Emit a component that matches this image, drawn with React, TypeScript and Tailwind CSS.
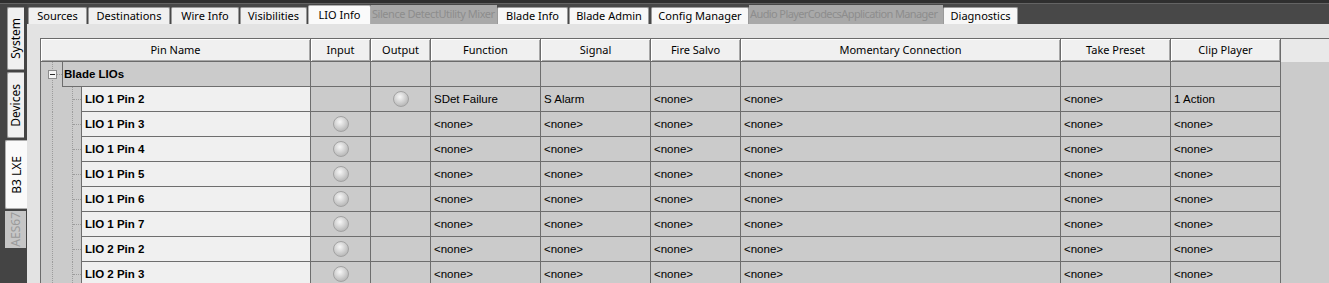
import React from "react";

const led = (
  <div className="w-[16px] h-[16px] rounded-full border border-[#a2a2a2] bg-[radial-gradient(circle_at_42%_35%,#f7f7f7_0%,#dadada_35%,#b9b9b9_75%,#a6a6a6_100%)]" />
);

function HeaderCell({ w, children }: { w: string; children?: React.ReactNode }) {
  return (
    <div
      className={`${w} h-full shrink-0 flex items-center justify-center pt-[1px] bg-[#f0f0f0] border-r border-b border-[#6b6b6b] shadow-[inset_1px_1px_0_#ffffff,inset_-1px_-1px_0_#a8a8a8] text-black`}
    >
      {children}
    </div>
  );
}

function Cell({ w, children, center }: { w: string; children?: React.ReactNode; center?: boolean }) {
  return (
    <div
      className={`${w} h-full shrink-0 flex items-center ${center ? "justify-center" : "pl-[3px] pt-[2px]"} border-r border-b border-[#6e6e6e] whitespace-nowrap overflow-hidden`}
    >
      {children}
    </div>
  );
}

type Row = {
  name: string;
  input: boolean;
  output: boolean;
  fn: string;
  signal: string;
  fire: string;
  mom: string;
  take: string;
  clip: string;
};

const N = "<none>";
const rows: Row[] = [
  { name: "LIO 1 Pin 2", input: false, output: true, fn: "SDet Failure", signal: "S Alarm", fire: N, mom: N, take: N, clip: "1 Action" },
  { name: "LIO 1 Pin 3", input: true, output: false, fn: N, signal: N, fire: N, mom: N, take: N, clip: N },
  { name: "LIO 1 Pin 4", input: true, output: false, fn: N, signal: N, fire: N, mom: N, take: N, clip: N },
  { name: "LIO 1 Pin 5", input: true, output: false, fn: N, signal: N, fire: N, mom: N, take: N, clip: N },
  { name: "LIO 1 Pin 6", input: true, output: false, fn: N, signal: N, fire: N, mom: N, take: N, clip: N },
  { name: "LIO 1 Pin 7", input: true, output: false, fn: N, signal: N, fire: N, mom: N, take: N, clip: N },
  { name: "LIO 2 Pin 2", input: true, output: false, fn: N, signal: N, fire: N, mom: N, take: N, clip: N },
  { name: "LIO 2 Pin 3", input: true, output: false, fn: N, signal: N, fire: N, mom: N, take: N, clip: N },
];

function Tab({ w, label, selected, light }: { w: string; label: string; selected?: boolean; light?: boolean }) {
  return (
    <div
      className={`${w} shrink-0 flex items-center justify-center rounded-t-[2px] border border-b-0 text-black whitespace-nowrap ${
        selected
          ? "h-[19px] bg-[#fafafa] border-[#b0b0b0]"
          : light
          ? "h-[17px] bg-[#f7f7f7] border-[#9a9a9a]"
          : "h-[17px] bg-[#f0f0f0] border-[#9a9a9a]"
      }`}
    >
      {label}
    </div>
  );
}

function DisabledTab({ w, label, tight }: { w: string; label: string; tight?: boolean }) {
  return (
    <div
      className={`${w} shrink-0 h-[19px] flex items-center bg-[#a9a9a9] text-[#8d8d8d] whitespace-nowrap overflow-hidden pl-[1px] ${
        tight ? "tracking-[-0.6px]" : "tracking-[-0.45px]"
      }`}
    >
      {label}
    </div>
  );
}

export default function App() {
  return (
    <div className="w-[1329px] h-[283px] overflow-hidden bg-[#484848] flex flex-col font-['Noto_Sans',sans-serif] text-[11px]">
      {/* top strip */}
      <div className="h-[4px] shrink-0 bg-[#2f2f2f] border-b border-[#646464]" />
      <div className="flex-1 flex min-h-0">
        {/* left vertical tabs */}
        <div className="w-[27px] shrink-0 flex flex-col pt-[3px] text-[12px] bg-[#444444]">
          <div className="ml-[7px] w-[17px] h-[63px] bg-[#f0f0f0] border border-[#9a9a9a] border-r-0 rounded-l-[2px] flex items-center justify-center">
            <span className="[writing-mode:vertical-rl] rotate-180 text-black leading-none whitespace-nowrap">System</span>
          </div>
          <div className="ml-[7px] mt-[2px] w-[17px] h-[66px] bg-[#f0f0f0] border border-[#9a9a9a] border-r-0 rounded-l-[2px] flex items-center justify-center">
            <span className="[writing-mode:vertical-rl] rotate-180 text-black leading-none whitespace-nowrap">Devices</span>
          </div>
          <div className="ml-[5px] mt-[2px] w-[22px] h-[69px] bg-[#fafafa] border border-[#b0b0b0] border-r-0 rounded-l-[2px] flex items-center justify-center">
            <span className="[writing-mode:vertical-rl] rotate-180 text-black leading-none whitespace-nowrap">B3 LXE</span>
          </div>
          <div className="ml-[5px] mt-[2px] w-[21px] h-[37px] bg-[#c6c6c6] flex items-center justify-center">
            <span className="[writing-mode:vertical-rl] rotate-180 text-[#9a9a9a] leading-none text-[12px] whitespace-nowrap">AES67</span>
          </div>
        </div>

        {/* main */}
        <div className="flex-1 flex flex-col min-w-0">
          {/* tab strip */}
          <div className="h-[20px] shrink-0 flex items-end pl-[1px]">
            <Tab w="w-[59px]" label="Sources" />
            <div className="w-[1px] shrink-0" />
            <Tab w="w-[82px]" label="Destinations" />
            <div className="w-[1px] shrink-0" />
            <Tab w="w-[68px]" label="Wire Info" />
            <div className="w-[1px] shrink-0" />
            <Tab w="w-[67px]" label="Visibilities" />
            <div className="w-[1px] shrink-0" />
            <Tab w="w-[63px]" label="LIO Info" selected />
            <DisabledTab w="w-[126px]" label="Silence DetectUtility Mixer" />
            <Tab w="w-[71px]" label="Blade Info" light />
            <div className="w-[1px] shrink-0" />
            <Tab w="w-[80px]" label="Blade Admin" light />
            <div className="w-[2px] shrink-0" />
            <Tab w="w-[98px]" label="Config Manager" light />
            <DisabledTab w="w-[194px]" label="Audio PlayerCodecsApplication Manager" tight />
            <Tab w="w-[75px]" label="Diagnostics" light />
          </div>

          {/* panel */}
          <div className="flex-1 min-h-0 bg-[#e3e3e3] pl-[13px] pt-[14px] flex">
            <div className="flex-1 min-w-0 border-t border-l border-[#6b6b6b] bg-[#cbcbcb] flex flex-col overflow-hidden">
              {/* header */}
              <div className="h-[23px] shrink-0 flex bg-[#e9e9e9]">
                <HeaderCell w="w-[270px]">Pin Name</HeaderCell>
                <HeaderCell w="w-[60px]">Input</HeaderCell>
                <HeaderCell w="w-[60px]">Output</HeaderCell>
                <HeaderCell w="w-[110px]">Function</HeaderCell>
                <HeaderCell w="w-[110px]">Signal</HeaderCell>
                <HeaderCell w="w-[90px]">Fire Salvo</HeaderCell>
                <HeaderCell w="w-[320px]">Momentary Connection</HeaderCell>
                <HeaderCell w="w-[110px]">Take Preset</HeaderCell>
                <HeaderCell w="w-[110px]">Clip Player</HeaderCell>
              </div>

              <div className="flex flex-col font-['Liberation_Sans',Arial,sans-serif] text-[11.5px] text-black">
                {/* Blade LIOs group row */}
                <div className="h-[25px] shrink-0 flex">
                  <div className="w-[21px] h-full shrink-0 relative">
                    <div className="absolute left-[11px] top-0 bottom-0 border-l border-dotted border-[#9c9c9c]" />
                    <div className="absolute left-[16px] top-[12px] w-[5px] border-t border-dotted border-[#9c9c9c]" />
                    <div className="absolute left-[7px] top-[8px] w-[9px] h-[9px] border border-[#8c8c8c] bg-[#f4f4f4] flex items-center justify-center">
                      <div className="w-[5px] h-[1px] bg-[#2a2a2a]" />
                    </div>
                  </div>
                  <div className="w-[249px] h-full shrink-0 flex items-center pl-[1px] pt-[2px] border-l border-r border-b border-[#6e6e6e] font-bold">
                    Blade LIOs
                  </div>
                  <Cell w="w-[60px]" />
                  <Cell w="w-[60px]" />
                  <Cell w="w-[110px]" />
                  <Cell w="w-[110px]" />
                  <Cell w="w-[90px]" />
                  <Cell w="w-[320px]" />
                  <Cell w="w-[110px]" />
                  <Cell w="w-[110px]" />
                </div>

                {rows.map((r) => (
                  <div key={r.name} className="h-[25px] shrink-0 flex">
                    <div className="w-[40px] h-full shrink-0 relative">
                      <div className="absolute left-[11px] top-0 bottom-0 border-l border-dotted border-[#9c9c9c]" />
                      <div className="absolute left-[31px] top-0 bottom-0 border-l border-dotted border-[#9c9c9c]" />
                      <div className="absolute left-[32px] top-[12px] w-[8px] border-t border-dotted border-[#9c9c9c]" />
                    </div>
                    <div className="w-[230px] h-full shrink-0 flex items-center pl-[3px] pt-[2px] bg-[#f0f0f0] border-l border-r border-b border-[#6e6e6e] font-bold">
                      {r.name}
                    </div>
                    <Cell w="w-[60px]" center>{r.input ? led : null}</Cell>
                    <Cell w="w-[60px]" center>{r.output ? led : null}</Cell>
                    <Cell w="w-[110px]">{r.fn}</Cell>
                    <Cell w="w-[110px]">{r.signal}</Cell>
                    <Cell w="w-[90px]">{r.fire}</Cell>
                    <Cell w="w-[320px]">{r.mom}</Cell>
                    <Cell w="w-[110px]">{r.take}</Cell>
                    <Cell w="w-[110px]">{r.clip}</Cell>
                  </div>
                ))}
              </div>
            </div>
          </div>
        </div>
      </div>
    </div>
  );
}
